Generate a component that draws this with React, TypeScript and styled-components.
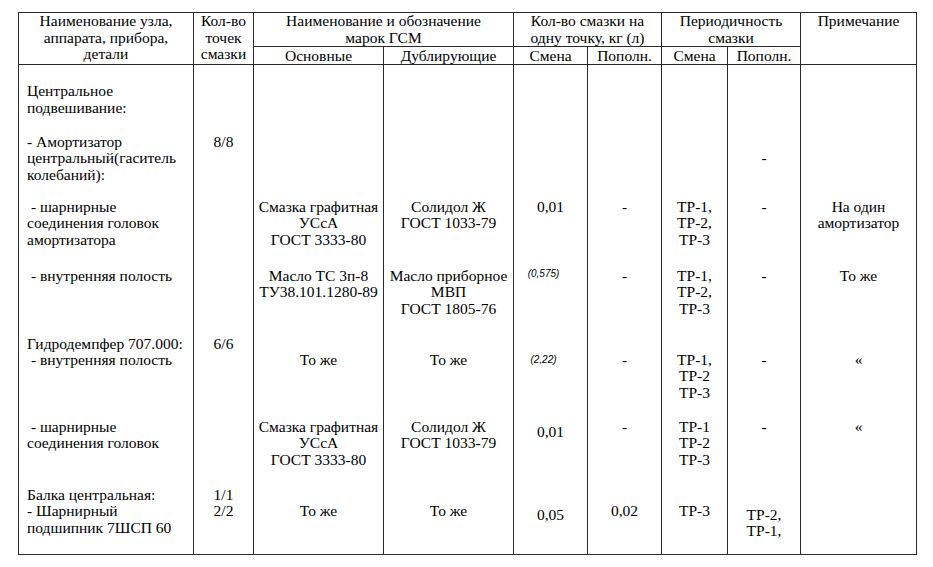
import styled, { createGlobalStyle } from 'styled-components';

const GlobalStyle = createGlobalStyle`
  html, body {
    margin: 0;
    padding: 0;
    background: #ffffff;
  }
  body {
    font-family: "Liberation Serif", "Times New Roman", serif;
    color: #000;
  }
`;

type TCell = {
  lines?: string[];
  pad?: number;
  small?: boolean;
  left?: boolean;
};

type TRow = {
  height: number;
  cells: TCell[];
};

const colWidths = [175, 60, 130, 130, 74, 74, 66, 73, 116];

const empty: TCell = {};

const rows: TRow[] = [
  {
    height: 67,
    cells: [
      { lines: ['Центральное', 'подвешивание:'], pad: 18, left: true },
      empty, empty, empty, empty, empty, empty, empty, empty,
    ],
  },
  {
    height: 65,
    cells: [
      { lines: ['- Амортизатор', 'центральный(гаситель', 'колебаний):'], pad: 2, left: true },
      { lines: ['8/8'], pad: 2 },
      empty, empty, empty, empty, empty,
      { lines: ['-'], pad: 18 },
      empty,
    ],
  },
  {
    height: 69,
    cells: [
      { lines: ['\u00a0- шарнирные', 'соединения головок', 'амортизатора'], pad: 2, left: true },
      empty,
      { lines: ['Смазка графитная', 'УСсА', 'ГОСТ 3333-80'], pad: 2 },
      { lines: ['Солидол Ж', 'ГОСТ 1033-79'], pad: 2 },
      { lines: ['0,01'], pad: 2 },
      { lines: ['-'], pad: 2 },
      { lines: ['ТР-1,', 'ТР-2,', 'ТР-3'], pad: 2 },
      { lines: ['-'], pad: 2 },
      { lines: ['На один', 'амортизатор'], pad: 2 },
    ],
  },
  {
    height: 68,
    cells: [
      { lines: ['\u00a0- внутренняя полость'], pad: 2, left: true },
      empty,
      { lines: ['Масло ТС 3п-8', 'ТУ38.101.1280-89'], pad: 2 },
      { lines: ['Масло приборное', 'МВП', 'ГОСТ 1805-76'], pad: 2 },
      { lines: ['(0,575)'], pad: 2, small: true },
      { lines: ['-'], pad: 2 },
      { lines: ['ТР-1,', 'ТР-2,', 'ТР-3'], pad: 2 },
      { lines: ['-'], pad: 2 },
      { lines: ['То же'], pad: 2 },
    ],
  },
  {
    height: 83,
    cells: [
      { lines: ['Гидродемпфер 707.000:', '\u00a0- внутренняя полость'], pad: 2, left: true },
      { lines: ['6/6'], pad: 2 },
      { lines: ['То же'], pad: 18 },
      { lines: ['То же'], pad: 18 },
      { lines: ['(2,22)'], pad: 20, small: true },
      { lines: ['-'], pad: 18 },
      { lines: ['ТР-1,', 'ТР-2', 'ТР-3'], pad: 18 },
      { lines: ['-'], pad: 18 },
      { lines: ['«'], pad: 18 },
    ],
  },
  {
    height: 68,
    cells: [
      { lines: ['\u00a0- шарнирные', 'соединения головок'], pad: 2, left: true },
      empty,
      { lines: ['Смазка графитная', 'УСсА', 'ГОСТ 3333-80'], pad: 2 },
      { lines: ['Солидол Ж', 'ГОСТ 1033-79'], pad: 2 },
      { lines: ['0,01'], pad: 7 },
      { lines: ['-'], pad: 2 },
      { lines: ['ТР-1', 'ТР-2', 'ТР-3'], pad: 2 },
      { lines: ['-'], pad: 2 },
      { lines: ['«'], pad: 2 },
    ],
  },
  {
    height: 70,
    cells: [
      { lines: ['Балка центральная:', '- Шарнирный', 'подшипник 7ШСП 60'], pad: 2, left: true },
      { lines: ['1/1', '2/2'], pad: 2 },
      { lines: ['То же'], pad: 18 },
      { lines: ['То же'], pad: 18 },
      { lines: ['0,05'], pad: 22 },
      { lines: ['0,02'], pad: 18 },
      { lines: ['ТР-3'], pad: 18 },
      { lines: ['ТР-2,', 'ТР-1,'], pad: 22 },
      empty,
    ],
  },
];

const renderLines = (lines: string[]) =>
  lines.map((line, i) => (
    <span key={i}>
      {line}
      {i < lines.length - 1 && <br />}
    </span>
  ));

const App = () => {
  return (
    <StPage>
      <GlobalStyle />
      <StTable>
        <colgroup>
          {colWidths.map((w, i) => (
            <StCol key={i} $w={w} />
          ))}
        </colgroup>
        <thead>
          <StHeadRow $h={33}>
            <StTh rowSpan={2}>Наименование узла,<br />аппарата, прибора,<br />детали</StTh>
            <StTh rowSpan={2}>Кол-во<br />точек<br />смазки</StTh>
            <StTh colSpan={2}>Наименование и обозначение<br />марок ГСМ</StTh>
            <StTh colSpan={2}>Кол-во смазки на<br />одну точку, кг (л)</StTh>
            <StTh colSpan={2}>Периодичность<br />смазки</StTh>
            <StTh rowSpan={2}>Примечание</StTh>
          </StHeadRow>
          <StHeadRow $h={18}>
            <StSubTh>Основные</StSubTh>
            <StSubTh>Дублирующие</StSubTh>
            <StSubTh>Смена</StSubTh>
            <StSubTh>Пополн.</StSubTh>
            <StSubTh>Смена</StSubTh>
            <StSubTh>Пополн.</StSubTh>
          </StHeadRow>
        </thead>
        <tbody>
          {rows.map((row, r) => (
            <StBodyRow key={r} $h={row.height}>
              {row.cells.map((cell, c) => (
                <StTd
                  key={c}
                  $pad={cell.pad ?? 0}
                  $left={!!cell.left}
                  $last={r === rows.length - 1}
                >
                  {cell.lines &&
                    (cell.small ? (
                      <StSmall>{renderLines(cell.lines)}</StSmall>
                    ) : (
                      renderLines(cell.lines)
                    ))}
                </StTd>
              ))}
            </StBodyRow>
          ))}
        </tbody>
      </StTable>
    </StPage>
  );
};

export default App;

const StPage = styled.div`
  width: 933px;
  height: 567px;
  padding: 12px 0 0 18px;
  box-sizing: border-box;
  background: #fff;
`;

const StTable = styled.table`
  border-collapse: collapse;
  table-layout: fixed;
  width: 898px;
  font-family: "Liberation Serif", "Times New Roman", serif;
  font-size: 15.5px;
  line-height: 16.6px;
  color: #000;
`;

const StCol = styled.col<{ $w: number }>`
  width: ${({ $w }) => $w}px;
`;

const StHeadRow = styled.tr<{ $h: number }>`
  height: ${({ $h }) => $h}px;
`;

const StTh = styled.th`
  font-weight: normal;
  border: 1px solid #2a2a2a;
  padding: 0 1px;
  vertical-align: top;
  text-align: center;
  white-space: nowrap;
`;

const StSubTh = styled(StTh)`
  vertical-align: middle;
  line-height: 16px;
`;

const StBodyRow = styled.tr<{ $h: number }>`
  height: ${({ $h }) => $h}px;
`;

const StTd = styled.td<{ $pad: number; $left: boolean; $last: boolean }>`
  border-left: 1px solid #2a2a2a;
  border-right: 1px solid #2a2a2a;
  border-bottom: ${({ $last }) => ($last ? '1px solid #2a2a2a' : 'none')};
  vertical-align: top;
  padding: ${({ $pad }) => $pad}px 1px 0 ${({ $left }) => ($left ? '8px' : '1px')};
  text-align: ${({ $left }) => ($left ? 'left' : 'center')};
  white-space: nowrap;
`;

const StSmall = styled.span`
  display: block;
  font-family: "Liberation Sans", Arial, sans-serif;
  font-style: italic;
  font-size: 10px;
  line-height: 12px;
  padding-right: 14px;
`;
